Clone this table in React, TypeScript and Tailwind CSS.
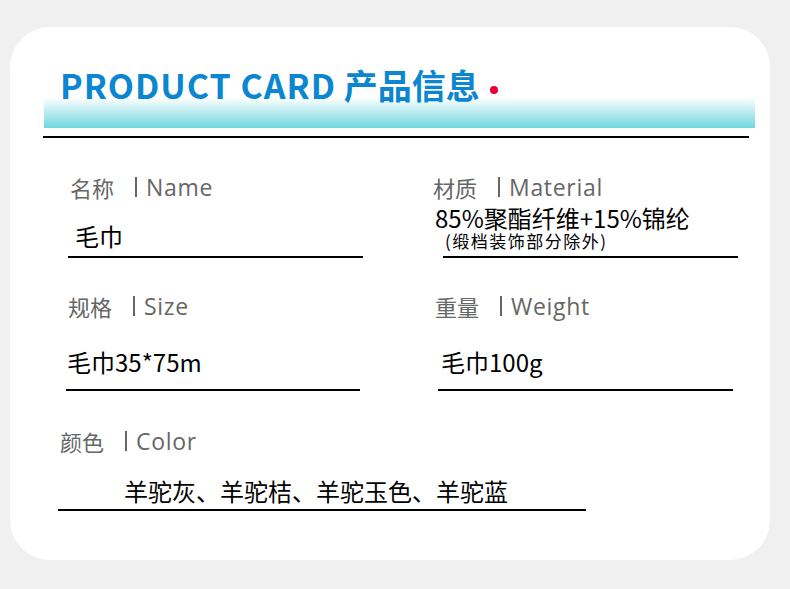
const cjk = "font-['Noto_Sans_CJK_SC',sans-serif]";

function Label({ cn, en }: { cn: string; en: string }) {
  return (
    <div className="flex h-[24px] items-center text-[#666]">
      <span className={`${cjk} text-[22px] leading-none`}>{cn}</span>
      <span className="ml-[21px] h-[20px] w-[2px] bg-[#666]" />
      <span className="ml-[9px] font-['Open_Sans',sans-serif] text-[23px] leading-none tracking-[0.03em]">
        {en}
      </span>
    </div>
  );
}

export default function App() {
  return (
    <div className="min-h-[589px] w-[790px] bg-[#f0f0f0] pt-[27px]">
      <div className="ml-[10px] h-[533px] w-[760px] rounded-[40px] bg-white">
        {/* header */}
        <div className="ml-[34px] mr-[15px] pt-[28px]">
          <div className="flex h-[73px] items-start bg-[linear-gradient(to_bottom,#ffffff_58%,#70d6df)] pl-[16px] pt-[8px]">
            <h1 className={`${cjk} text-[34px] font-bold leading-[44px] text-[#0a87d0]`}>
              <span className="tracking-[1px]">PRODUCT CARD</span> 产品信息
            </h1>
            <span className="ml-[10px] mt-[23px] h-[8px] w-[8px] rounded-full bg-[#e6003a]" />
          </div>
        </div>
        <div className="ml-[33px] mr-[21px] mt-[8px] h-[2px] bg-black" />

        {/* row 1 */}
        <div className="mt-[37px] flex">
          <div className="ml-[58px] w-[295px]">
            <div className="pl-[2px]">
              <Label cn="名称" en="Name" />
            </div>
            <div className={`flex h-[57px] items-end pb-[6px] pl-[7px] ${cjk} text-[24px] leading-[28px] text-black`}>
              毛巾
            </div>
            <div className="h-[2px] bg-black" />
          </div>
          <div className="ml-[70px] w-[305px]">
            <Label cn="材质" en="Material" />
            <div className={`flex h-[57px] flex-col justify-end pb-[5px] pl-[2px] ${cjk} text-black`}>
              <div className="text-[24px] leading-[26px]">85%聚酯纤维+15%锦纶</div>
              <div className="pl-[10px] text-[17px] leading-[20px] tracking-[1.5px]">(缎档装饰部分除外)</div>
            </div>
            <div className="ml-[10px] h-[2px] bg-black" />
          </div>
        </div>

        {/* row 2 */}
        <div className="mt-[36px] flex">
          <div className="ml-[56px] w-[294px]">
            <div className="pl-[2px]">
              <Label cn="规格" en="Size" />
            </div>
            <div className={`flex h-[71px] items-end pb-[13px] pl-[1px] ${cjk} text-[24px] leading-[28px] text-black`}>
              毛巾35*75m
            </div>
            <div className="h-[2px] bg-black" />
          </div>
          <div className="ml-[75px] w-[298px]">
            <Label cn="重量" en="Weight" />
            <div className={`flex h-[71px] items-end pb-[13px] pl-[6px] ${cjk} text-[24px] leading-[28px] text-black`}>
              毛巾100g
            </div>
            <div className="ml-[3px] h-[2px] bg-black" />
          </div>
        </div>

        {/* row 3 */}
        <div className="ml-[48px] mt-[38px] w-[528px]">
          <div className="pl-[2px]">
            <Label cn="颜色" en="Color" />
          </div>
          <div className={`flex h-[56px] items-end pb-[4px] pl-[66px] ${cjk} text-[24px] leading-[28px] text-black`}>
            羊驼灰、羊驼桔、羊驼玉色、羊驼蓝
          </div>
          <div className="h-[2px] bg-black" />
        </div>
      </div>
    </div>
  );
}
